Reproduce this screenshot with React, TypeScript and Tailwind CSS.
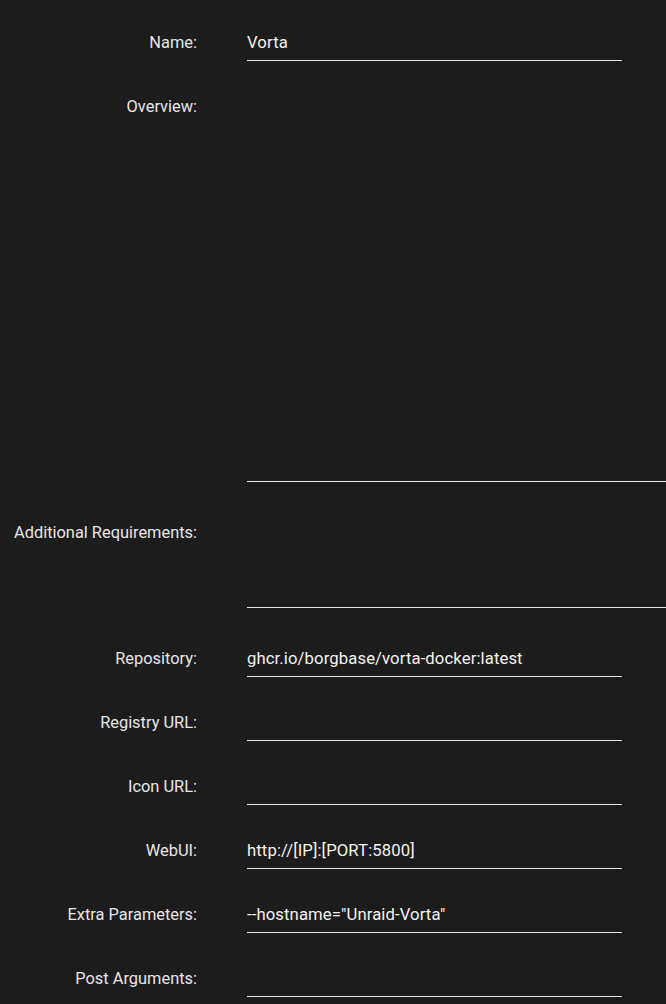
const rows: { label: string; value?: string; kind: "input" | "area"; h?: string }[] = [
  { label: "Name:", value: "Vorta", kind: "input" },
  { label: "Overview:", kind: "area", h: "h-[394px]" },
  { label: "Additional Requirements:", kind: "area", h: "h-[94px]" },
  { label: "Repository:", value: "ghcr.io/borgbase/vorta-docker:latest", kind: "input" },
  { label: "Registry URL:", kind: "input" },
  { label: "Icon URL:", kind: "input" },
  { label: "WebUI:", value: "http://[IP]:[PORT:5800]", kind: "input" },
  { label: "Extra Parameters:", value: '--hostname="Unraid-Vorta"', kind: "input" },
  { label: "Post Arguments:", kind: "input" },
];

export default function App() {
  return (
    <div className="min-h-screen w-full overflow-hidden bg-[#1c1c1c] pt-[24px] font-['Roboto',sans-serif] text-[#e6e6e6]">
      {rows.map((r) => (
        <div
          key={r.label}
          className={`flex items-start ${r.kind === "area" ? "mb-[32px]" : "mb-[27px]"}`}
        >
          <div className="w-[197px] shrink-0 text-right text-[16.4px] leading-[37px]">{r.label}</div>
          {r.kind === "input" ? (
            <div className="ml-[50px] h-[37px] w-[375px] shrink-0 border-b border-[#e6e6e6] text-[16.7px] leading-[37px] tracking-[0.1px] text-[#f2f2f2]">
              {r.value ?? ""}
            </div>
          ) : (
            <div className={`ml-[50px] ${r.h} flex-1 border-b border-[#e6e6e6]`} />
          )}
        </div>
      ))}
    </div>
  );
}
